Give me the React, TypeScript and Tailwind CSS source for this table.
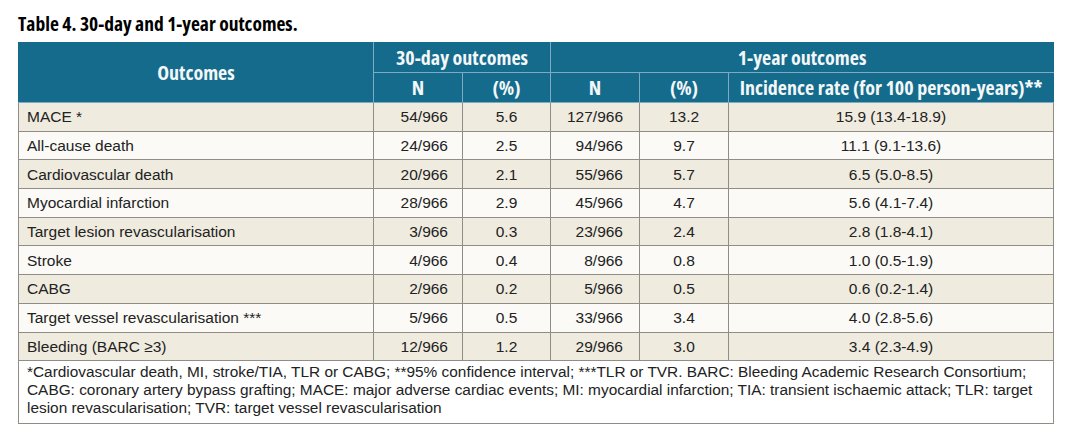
const rows = [
  { label: 'MACE *', n30: '54/966', p30: '5.6', n1: '127/966', p1: '13.2', rate: '15.9 (13.4-18.9)' },
  { label: 'All-cause death', n30: '24/966', p30: '2.5', n1: '94/966', p1: '9.7', rate: '11.1 (9.1-13.6)' },
  { label: 'Cardiovascular death', n30: '20/966', p30: '2.1', n1: '55/966', p1: '5.7', rate: '6.5 (5.0-8.5)' },
  { label: 'Myocardial infarction', n30: '28/966', p30: '2.9', n1: '45/966', p1: '4.7', rate: '5.6 (4.1-7.4)' },
  { label: 'Target lesion revascularisation', n30: '3/966', p30: '0.3', n1: '23/966', p1: '2.4', rate: '2.8 (1.8-4.1)' },
  { label: 'Stroke', n30: '4/966', p30: '0.4', n1: '8/966', p1: '0.8', rate: '1.0 (0.5-1.9)' },
  { label: 'CABG', n30: '2/966', p30: '0.2', n1: '5/966', p1: '0.5', rate: '0.6 (0.2-1.4)' },
  { label: 'Target vessel revascularisation ***', n30: '5/966', p30: '0.5', n1: '33/966', p1: '3.4', rate: '4.0 (2.8-5.6)' },
  { label: 'Bleeding (BARC \u22653)', n30: '12/966', p30: '1.2', n1: '29/966', p1: '3.0', rate: '3.4 (2.3-4.9)' },
];

// condensed bold for title and header cells
const narrow = "font-['Open_Sans',sans-serif] font-bold font-stretch-[75%]";
const th = `${narrow} border border-[#7eaac2] text-[20px] leading-[26px] text-[#f4f7f8] text-center align-middle whitespace-nowrap`;
const td = 'border border-[#8f8d86] align-middle';

export default function App() {
  return (
    <div className="w-[1071px] h-[445px] bg-white font-['Liberation_Sans',Arial,sans-serif] text-[#222]">
      <div className="pl-[18px] pt-[11px]">
        <h1 className={`${narrow} text-[19.5px] leading-[26px] text-black`}>Table 4. 30-day and 1-year outcomes.</h1>
        <table className="mt-[5px] border-collapse table-fixed w-[1035px] text-[15.5px]">
          <colgroup>
            <col className="w-[355px]" />
            <col className="w-[89px]" />
            <col className="w-[88px]" />
            <col className="w-[89px]" />
            <col className="w-[89px]" />
            <col className="w-[325px]" />
          </colgroup>
          <thead className="bg-[#146b8c]">
            <tr className="h-[30px]">
              <th rowSpan={2} className={`${th} border-l-[#146b8c] border-t-[#146b8c]`}>Outcomes</th>
              <th colSpan={2} className={`${th} border-t-[#146b8c]`}>30-day outcomes</th>
              <th colSpan={3} className={`${th} border-t-[#146b8c] border-r-[#146b8c]`}>1-year outcomes</th>
            </tr>
            <tr className="h-[30px]">
              <th className={th}>N</th>
              <th className={th}>(%)</th>
              <th className={th}>N</th>
              <th className={th}>(%)</th>
              <th className={`${th} border-r-[#146b8c]`}>Incidence rate (for 100 person-years)**</th>
            </tr>
          </thead>
          <tbody>
            {rows.map((r, i) => (
              <tr key={r.label} className={`h-[28.7px] ${i % 2 === 0 ? 'bg-[#efebdf]' : 'bg-[#fbfaf6]'}`}>
                <td className={`${td} pl-[8px]`}>{r.label}</td>
                <td className={`${td} text-right pr-[14px]`}>{r.n30}</td>
                <td className={`${td} text-center`}>{r.p30}</td>
                <td className={`${td} text-right pr-[16px]`}>{r.n1}</td>
                <td className={`${td} text-center`}>{r.p1}</td>
                <td className={`${td} text-center`}>{r.rate}</td>
              </tr>
            ))}
            <tr>
              <td colSpan={6} className={`${td} pl-[8px] pt-[2px] pb-[6px] text-[15.4px] leading-[18px] whitespace-nowrap`}>
                *Cardiovascular death, MI, stroke/TIA, TLR or CABG; **95% confidence interval; ***TLR or TVR. BARC: Bleeding Academic Research Consortium;
                <br />
                CABG: coronary artery bypass grafting; MACE: major adverse cardiac events; MI: myocardial infarction; TIA: transient ischaemic attack; TLR: target
                <br />
                lesion revascularisation; TVR: target vessel revascularisation
              </td>
            </tr>
          </tbody>
        </table>
      </div>
    </div>
  );
}
